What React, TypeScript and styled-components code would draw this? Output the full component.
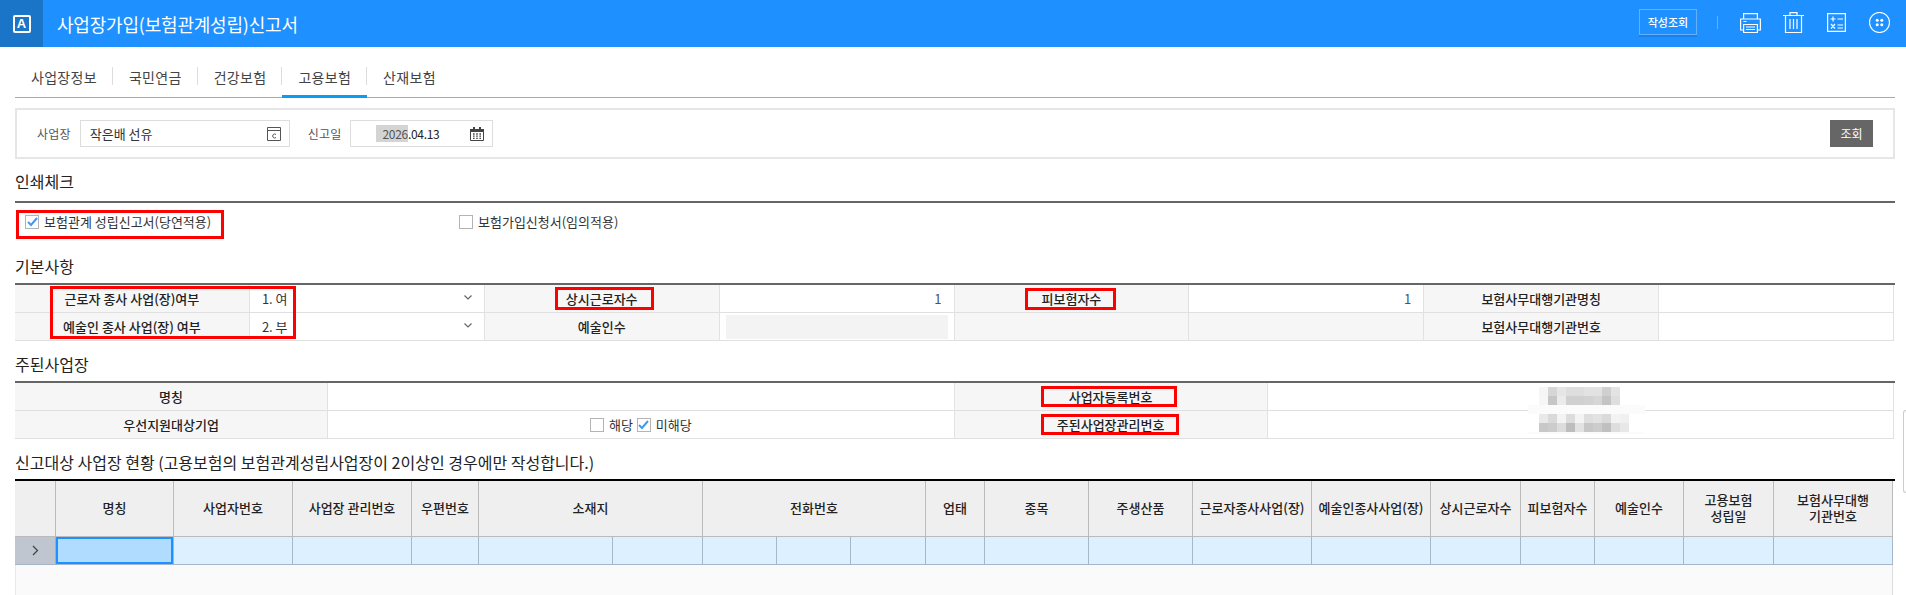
import React from "react";
import styled, { createGlobalStyle } from "styled-components";

const Global = createGlobalStyle`
  html, body { margin: 0; padding: 0; background: #fff; overflow: hidden; }
  * { box-sizing: border-box; }
  body { font-family: "Noto Sans CJK KR", "Noto Sans", sans-serif; color: #222; }
`;

const Page = styled.div`
  position: relative;
  width: 1906px;
  height: 595px;
  overflow: hidden;
  display: flex;
  flex-direction: column;
`;
const Header = styled.header`
  height: 47px;
  flex: none;
  background: #1e90ff;
  display: flex;
  align-items: center;
  padding-right: 16px;
  color: #fff;
`;
const LogoBlock = styled.div`
  width: 43px;
  height: 47px;
  background: #1a74c8;
  display: flex;
  align-items: center;
  justify-content: center;
`;
const LogoMark = styled.div`
  width: 18px;
  height: 18px;
  border: 2px solid #fff;
  border-radius: 2px;
  font: 700 13px/14px "Liberation Sans", sans-serif;
  text-align: center;
  color: #fff;
`;
const Title = styled.h1`
  margin: 0 0 0 14px;
  font-size: 18px;
  font-weight: 400;
  letter-spacing: -0.2px;
  flex: 1;
`;
const HeaderButton = styled.button`
  width: 58px;
  height: 26px;
  margin-top: -3px;
  padding: 0;
  background: transparent;
  border: 1px solid #62b2ff;
  box-shadow: 0 2px 0 #1a80e6;
  color: #fff;
  font: 500 11px "Noto Sans CJK KR", sans-serif;
`;
const HeaderDivider = styled.span`
  width: 1px;
  height: 13px;
  margin: -3px 22px 0 20px;
  background: #62b2ff;
`;
const HeaderIcon = styled.svg<{ $gap?: number }>`
  display: block;
  flex: none;
  margin-left: ${(p) => p.$gap ?? 0}px;
  margin-top: -2px;
  fill: none;
  stroke: #fff;
  stroke-width: 1.2;
`;

const Content = styled.main`
  flex: 1;
  padding: 0 11px 0 15px;
  display: flex;
  flex-direction: column;
`;
const Tabs = styled.nav`
  height: 51px;
  flex: none;
  display: flex;
  align-items: flex-end;
  border-bottom: 1px solid #aaa;
`;
const Tab = styled.div<{ $active?: boolean; $last?: boolean }>`
  position: relative;
  height: 34px;
  margin-bottom: -1px;
  padding: 0 16px;
  font-size: 14px;
  line-height: 26px;
  color: #444;
  letter-spacing: 0.3px;
  border-bottom: 3px solid ${(p) => (p.$active ? "#0a9cf5" : "transparent")};
  &::after {
    content: ${(p) => (p.$last ? "none" : '""')};
    position: absolute;
    right: 0;
    top: 3px;
    height: 18px;
    width: 1px;
    background: #ddd;
  }
`;
const SearchPanel = styled.section`
  flex: none;
  margin-top: 10px;
  height: 51px;
  border: 2px solid #e6e6e6;
  display: flex;
  align-items: center;
  padding: 0 20px;
`;
const FieldLabel = styled.label<{ $gap?: number }>`
  font-size: 12px;
  color: #555;
  margin-left: ${(p) => p.$gap ?? 0}px;
  letter-spacing: 0.2px;
`;
const FieldBox = styled.div<{ $w: number }>`
  width: ${(p) => p.$w}px;
  height: 27px;
  margin-left: 9px;
  border: 1px solid #ddd;
  display: flex;
  align-items: center;
  justify-content: space-between;
  padding: 0 8px 0 9px;
  font-size: 13px;
  color: #333;
`;
const DateText = styled.div`
  margin-left: 16px;
  font-size: 12px;
  line-height: 15px;
  letter-spacing: -0.3px;
  color: #222;
`;
const Selected = styled.span`
  background: #d4d4d4;
  color: #555;
  padding-left: 6px;
`;
const SmallIcon = styled.svg`
  display: block;
  flex: none;
`;
const SearchButton = styled.button`
  margin-left: auto;
  width: 43px;
  height: 27px;
  margin-right: 0;
  padding: 0;
  border: none;
  background: #666;
  color: #fff;
  font: 400 12px "Noto Sans CJK KR", sans-serif;
`;
const SectionTitle = styled.h2<{ $top: number; $pb: number; $color?: string }>`
  margin: ${(p) => p.$top}px 0 0;
  padding-bottom: ${(p) => p.$pb}px;
  font-size: 16px;
  line-height: 20px;
  font-weight: 400;
  color: #222;
  border-bottom: 2px solid ${(p) => p.$color ?? "#666"};
  flex: none;
`;
const CheckRow = styled.div`
  flex: none;
  display: grid;
  grid-template-columns: 434px 1fr;
  padding: 8px 0 8px 10px;
  height: 37px;
  align-items: center;
`;
const CheckItem = styled.label`
  display: inline-flex;
  align-items: center;
  gap: 5px;
  font-size: 13px;
  color: #333;
  white-space: nowrap;
`;
const Box = styled.span`
  width: 14px;
  height: 14px;
  flex: none;
  border: 1px solid #b4b4b4;
  background: #fff;
  display: inline-flex;
  align-items: center;
  justify-content: center;
`;
const FormTable = styled.div<{ $cols: string }>`
  flex: none;
  width: 1879px;
  display: grid;
  grid-template-columns: ${(p) => p.$cols};
  grid-auto-rows: 28px;
`;
const LabelCell = styled.div`
  background: #f6f6f6;
  border-right: 1px solid #e2e2e2;
  border-bottom: 1px solid #e0e0e0;
  display: flex;
  align-items: center;
  justify-content: center;
  font-size: 13px;
  font-weight: 500;
  color: #222;
  white-space: nowrap;
`;
const ValueCell = styled.div<{ $align?: string; $muted?: boolean }>`
  background: ${(p) => (p.$muted ? "#f6f6f6" : "#fff")};
  border-right: 1px solid #e2e2e2;
  border-bottom: 1px solid #e0e0e0;
  display: flex;
  align-items: center;
  justify-content: ${(p) => p.$align ?? "flex-start"};
  padding: 0 12px;
  font-size: 13px;
  color: #333;
  gap: 4px;
`;
const DisabledFill = styled.div`
  flex: 1;
  align-self: stretch;
  margin: 2px -6px 1px;
  background: #f3f3f3;
`;
const Number1 = styled.span`
  color: #456;
`;
const SelectValue = styled.span`
  flex: 1;
`;
const Chevron = styled.svg`
  display: block;
  flex: none;
  margin-top: -3px;
`;
const DataGrid = styled.div`
  flex: 1;
  width: 1878px;
  display: grid;
  grid-template-columns: 41px 118px 119px 119px 67px 134px 90px 74px 74px 75px 59px 104px 104px 119px 119px 90px 74px 89px 90px 119px;
  grid-template-rows: 56px 28px 1fr;
`;
const Head = styled.div<{ $span?: number }>`
  grid-column: span ${(p) => p.$span ?? 1};
  background: #efefef;
  border-right: 1px solid #bbb;
  border-bottom: 1px solid #bbb;
  padding-bottom: 1px;
  display: flex;
  align-items: center;
  justify-content: center;
  text-align: center;
  font-size: 13px;
  line-height: 16px;
  font-weight: 500;
  color: #222;
  white-space: pre-line;
`;
const RowHead = styled.div`
  background: #c0c6cf;
  border-right: 1px solid #aab;
  border-bottom: 1px solid #a4b4c4;
  display: flex;
  align-items: center;
  justify-content: center;
`;
const DataCell = styled.div<{ $current?: boolean }>`
  background: ${(p) => (p.$current ? "#b0dcff" : "#ddf0ff")};
  border-right: 1px solid #a4b8cc;
  border-bottom: 1px solid #a4b8cc;
  box-shadow: ${(p) => (p.$current ? "inset 0 0 0 2px #1e90ff" : "none")};
`;
const EmptyArea = styled.div`
  grid-column: 1 / -1;
  background: #fafafa;
  border-left: 1px solid #e8e8e8;
  border-right: 1px solid #ddd;
`;
const RedMark = styled.div<{ $x: number; $y: number; $w: number; $h: number }>`
  position: absolute;
  left: ${(p) => p.$x}px;
  top: ${(p) => p.$y}px;
  width: ${(p) => p.$w}px;
  height: ${(p) => p.$h}px;
  border: 3px solid #f00;
  pointer-events: none;
`;
const MosaicSvg = styled.svg`
  position: absolute;
  left: 1528px;
  top: 387px;
`;
const ScrollTab = styled.div`
  position: absolute;
  right: 0;
  top: 410px;
  width: 3px;
  height: 83px;
  border: 1px solid #ccc;
  border-right: none;
  border-radius: 3px 0 0 3px;
`;

const Check = () => (
  <svg width="11" height="10" viewBox="0 0 11 10" fill="none" stroke="#3f9bf0" strokeWidth="2">
    <path d="M1 5l3 3 6-7" />
  </svg>
);
const Down = () => (
  <Chevron width="8" height="5" viewBox="0 0 8 5" fill="none" stroke="#666" strokeWidth="1.2">
    <path d="M.5.5L4 4 7.5.5" />
  </Chevron>
);

const marks = [
  [16, 210, 208, 29],
  [50, 286, 246, 53],
  [555, 287, 99, 23],
  [1025, 288, 91, 22],
  [1041, 386, 136, 21],
  [1041, 414, 138, 21],
];
const mosaic = [
  { y: 0, c: ["f5", "d6", "e6", "de", "de", "e2", "e2", "cf", "e3"] },
  { y: 9, c: ["f6", "c6", "eb", "d0", "d0", "d2", "d6", "c4", "de"] },
  { y: 27, c: ["e9", "d9", "f3", "dc", "f3", "de", "e2", "da", "f3", "f0"] },
  { y: 36, c: ["c8", "cc", "dc", "bd", "e2", "c7", "cc", "c0", "de", "e8"] },
];
const heads: [string, number?][] = [
  [""], ["명칭"], ["사업자번호"], ["사업장 관리번호"], ["우편번호"], ["소재지", 2], ["전화번호", 3],
  ["업태"], ["종목"], ["주생산품"], ["근로자종사사업(장)"], ["예술인종사사업(장)"], ["상시근로자수"],
  ["피보험자수"], ["예술인수"], ["고용보험\n성립일"], ["보험사무대행\n기관번호"],
];

export default function App() {
  return (
    <Page>
      <Global />
      <Header>
        <LogoBlock><LogoMark>A</LogoMark></LogoBlock>
        <Title>사업장가입(보험관계성립)신고서</Title>
        <HeaderButton>작성조회</HeaderButton>
        <HeaderDivider />
        <HeaderIcon width="21" height="20" viewBox="0 0 21 20">
          <path d="M3.6 6V.6h13.8V6" />
          <path d="M3.6 17H.6V6h19.8v11h-3" />
          <path d="M3.6 11.5h13.8v8H3.6z" />
          <path d="M6 14h9M6 16.5h9M3.5 8.5h3" />
        </HeaderIcon>
        <HeaderIcon $gap={22} width="21" height="21" viewBox="0 0 21 21">
          <path d="M0 3.5h21M7 3.5V.6h7v2.9M2.5 3.5v17h16v-17" />
          <path d="M7 7v10M10.5 7v10M14 7v10" />
        </HeaderIcon>
        <HeaderIcon $gap={23} width="19" height="19" viewBox="0 0 19 19">
          <path d="M.6.6h17.8v17.8H.6z" />
          <path d="M6 3.5v5M3.5 6h5M10.5 6h5.5M4 11l4 4.5M8 11l-4 4.5M10.5 12h5.5M10.5 15h5.5" />
        </HeaderIcon>
        <HeaderIcon $gap={23} width="21" height="21" viewBox="0 0 21 21">
          <circle cx="10.5" cy="10.5" r="10" />
          <g fill="#fff" stroke="none">
            <circle cx="8.2" cy="8.2" r="1.5" /><circle cx="12.8" cy="8.2" r="1.5" />
            <circle cx="8.2" cy="12.8" r="1.5" /><circle cx="12.8" cy="12.8" r="1.5" />
          </g>
        </HeaderIcon>
      </Header>
      <Content>
        <Tabs>
          <Tab>사업장정보</Tab>
          <Tab>국민연금</Tab>
          <Tab>건강보험</Tab>
          <Tab $active>고용보험</Tab>
          <Tab $last>산재보험</Tab>
        </Tabs>
        <SearchPanel>
          <FieldLabel>사업장</FieldLabel>
          <FieldBox $w={210}>
            작은배 선유
            <SmallIcon width="14" height="14" viewBox="0 0 14 14" fill="none" stroke="#555">
              <path d="M.5.5h13v13H.5zM.5 3.5h13M9 7.5a2 2 0 1 0 0 3" />
            </SmallIcon>
          </FieldBox>
          <FieldLabel $gap={18}>신고일</FieldLabel>
          <FieldBox $w={143}>
            <DateText><Selected>2026</Selected>.04.13</DateText>
            <SmallIcon width="14" height="14" viewBox="0 0 14 14" fill="none" stroke="#444">
              <path d="M.5 2.5h13v11H.5z" />
              <path d="M0 2h14v3H0zM3 0h2v2H3zM9 0h2v2H9z" fill="#444" stroke="none" />
              <path d="M3 7h8M3 9.2h8M3 11.4h8" strokeDasharray="1.6 1.6" strokeWidth="1.3" />
            </SmallIcon>
          </FieldBox>
          <SearchButton>조회</SearchButton>
        </SearchPanel>

        <SectionTitle $top={12} $pb={10}>인쇄체크</SectionTitle>
        <CheckRow>
          <CheckItem><Box><Check /></Box>보험관계 성립신고서(당연적용)</CheckItem>
          <CheckItem><Box />보험가입신청서(임의적용)</CheckItem>
        </CheckRow>

        <SectionTitle $top={16} $pb={7}>기본사항</SectionTitle>
        <FormTable $cols="repeat(8, 1fr)">
          <LabelCell>근로자 종사 사업(장)여부</LabelCell>
          <ValueCell><SelectValue>1. 여</SelectValue><Down /></ValueCell>
          <LabelCell>상시근로자수</LabelCell>
          <ValueCell $align="flex-end"><Number1>1</Number1></ValueCell>
          <LabelCell>피보험자수</LabelCell>
          <ValueCell $align="flex-end"><Number1>1</Number1></ValueCell>
          <LabelCell>보험사무대행기관명칭</LabelCell>
          <ValueCell />
          <LabelCell>예술인 종사 사업(장) 여부</LabelCell>
          <ValueCell><SelectValue>2. 부</SelectValue><Down /></ValueCell>
          <LabelCell>예술인수</LabelCell>
          <ValueCell><DisabledFill /></ValueCell>
          <LabelCell />
          <ValueCell $muted />
          <LabelCell>보험사무대행기관번호</LabelCell>
          <ValueCell />
        </FormTable>

        <SectionTitle $top={13} $pb={7}>주된사업장</SectionTitle>
        <FormTable $cols="1fr 2fr 1fr 2fr">
          <LabelCell>명칭</LabelCell>
          <ValueCell />
          <LabelCell>사업자등록번호</LabelCell>
          <ValueCell />
          <LabelCell>우선지원대상기업</LabelCell>
          <ValueCell $align="center">
            <CheckItem><Box />해당</CheckItem>
            <CheckItem><Box><Check /></Box>미해당</CheckItem>
          </ValueCell>
          <LabelCell>주된사업장관리번호</LabelCell>
          <ValueCell />
        </FormTable>

        <SectionTitle $top={13} $pb={7} $color="#000">
          신고대상 사업장 현황 (고용보험의 보험관계성립사업장이 2이상인 경우에만 작성합니다.)
        </SectionTitle>
        <DataGrid>
          {heads.map(([t, s], i) => (
            <Head key={i} $span={s}>{t}</Head>
          ))}
          <RowHead>
            <svg width="7" height="11" viewBox="0 0 7 11" fill="none" stroke="#444" strokeWidth="1.3">
              <path d="M1 1l4.5 4.5L1 10" />
            </svg>
          </RowHead>
          {Array.from({ length: 19 }, (_, i) => (
            <DataCell key={i} $current={i === 0} />
          ))}
          <EmptyArea />
        </DataGrid>
      </Content>

      {marks.map(([x, y, w, h], i) => (
        <RedMark key={i} $x={x} $y={y} $w={w} $h={h} />
      ))}
      <MosaicSvg width="117" height="47" viewBox="0 0 117 47" shapeRendering="crispEdges">
        <rect x="0" y="18" width="117" height="9" fill="#fbfbfb" />
        <rect x="0" y="45" width="117" height="2" fill="#fbfbfb" />
        {mosaic.map((row) =>
          row.c.map((c, i) => (
            <rect key={`${row.y}-${i}`} x={11 + i * 9} y={row.y} width="9" height="9" fill={`#${c}${c}${c}`} />
          ))
        )}
      </MosaicSvg>
      <ScrollTab />
    </Page>
  );
}
